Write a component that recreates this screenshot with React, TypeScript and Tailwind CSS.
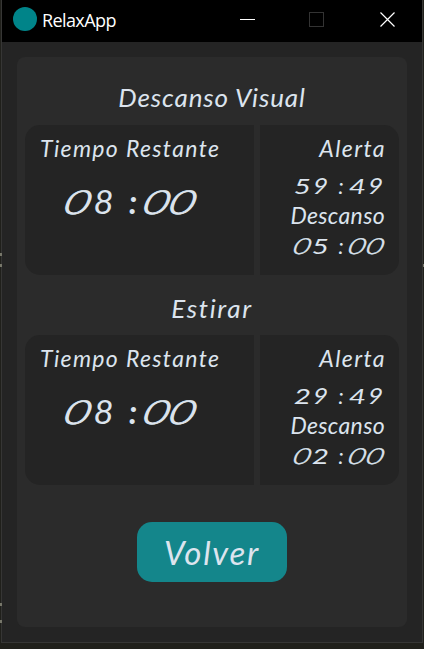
import React from "react";

const hand = "font-['Lato','Open_Sans',sans-serif] italic text-[#dce4ee] whitespace-nowrap";

function Label({ text, className }: { text: string; className: string }) {
  return <span className={`${hand} block ${className}`}>{text}</span>;
}

function Clock({ value, large = false }: { value: string; large?: boolean }) {
  const zero = large
    ? "scale-x-[1.42] -skew-x-12 font-light [-webkit-text-stroke:0.9px_#dce4ee]"
    : "scale-x-[1.42] -skew-x-12 font-light [-webkit-text-stroke:0.5px_#dce4ee]";
  return (
    <div className={`${hand} flex ${large ? "w-[132px] h-10 text-[33px] leading-10" : "w-[92px] h-[30px] text-[22px] leading-[30px]"}`}>
      {value.split("").map((c, i) => {
        let shape = "scale-x-[1.35]";
        if (c === "0") shape = zero;
        if (c === "8") shape = "scale-x-[1.05] -translate-x-px";
        if (c === "9") shape = "scale-x-[1.15] -skew-x-6";
        if (c === ":") shape = large ? "font-bold translate-x-0.5" : "translate-x-0.5";
        return (
          <span key={i} className="flex-1 min-w-0 flex justify-center">
            <span className={`inline-block ${shape}`}>{c}</span>
          </span>
        );
      })}
    </div>
  );
}

function Section({ alert, rest }: { alert: string; rest: string }) {
  return (
    <div className="flex gap-1.5 h-[150px]">
      <div className="w-[229px] bg-[#242424] rounded-l-[15px] pt-[8px] pl-[15px]">
        <Label text="Tiempo Restante" className="text-[23px] leading-[30px] tracking-[1.35px]" />
        <div className="mt-[18px] ml-[25px]">
          <Clock value="08:00" large />
        </div>
      </div>
      <div className="w-[139px] bg-[#242424] rounded-r-[15px] pt-[8px] pr-[14px] flex flex-col items-end">
        <Label text="Alerta" className="text-[23px] leading-[30px] tracking-[1.4px] -mr-px" />
        <div className="mt-[8px]">
          <Clock value={alert} />
        </div>
        <Label text="Descanso" className="text-[23px] leading-[28px] h-[30px] tracking-[0.35px]" />
        <Clock value={rest} />
      </div>
    </div>
  );
}

export default function App() {
  return (
    <div className="relative w-[424px] h-[649px] overflow-hidden bg-[#20201b] pl-px">
      <div className="w-[422px] h-[643px] border-x border-b border-[#363635] bg-[#242424]">
        <header className="h-[42px] bg-black flex items-start">
          <div className="mt-[7px] ml-[11px] size-6 rounded-full bg-[#008489]" />
          <span className="ml-[5px] mt-[8px] font-['Open_Sans',sans-serif] text-[18px] leading-6 tracking-[-0.6px] text-white w-[80px] whitespace-nowrap">RelaxApp</span>
          <svg className="ml-[118px] mt-3" width="155" height="15" viewBox="0 0 155 15" fill="none">
            <path d="M0 7.5H15" stroke="#fff" />
            <rect x="69.5" y="0.5" width="14" height="14" stroke="#333" />
            <path d="M140.5 0.5L154.5 14.5M154.5 0.5L140.5 14.5" stroke="#fff" strokeWidth="1.2" />
          </svg>
        </header>
        <main className="mx-[15px] mt-[15px] w-[390px] h-[570px] rounded-lg bg-[#2b2b2b] px-2 pt-[22px]">
          <Label text="Descanso Visual" className="h-[46px] text-center text-[26px] leading-[36px] tracking-[0.85px]" />
          <Section alert="59:49" rest="05:00" />
          <Label text="Estirar" className="h-[60px] pt-[15px] text-center text-[26px] leading-[36px] tracking-[1.7px]" />
          <Section alert="29:49" rest="02:00" />
          <button className={`${hand} mx-auto mt-[37px] block h-[60px] w-[150px] rounded-[15px] bg-[#14868b] text-[33px] leading-[58px] tracking-[1.7px]`}>
            Volver
          </button>
        </main>
      </div>
      <i className="absolute left-0 top-[253px] h-[3px] w-0.5 bg-[#77776a]" />
      <i className="absolute left-0 top-[264px] h-[3px] w-0.5 bg-[#77776a]" />
      <i className="absolute left-0 top-[603px] h-[3px] w-0.5 bg-[#77776a]" />
      <i className="absolute left-0 top-[620px] h-[3px] w-0.5 bg-[#77776a]" />
      <i className="absolute right-0 top-[264px] h-[3px] w-px bg-[#77776a]" />
    </div>
  );
}
